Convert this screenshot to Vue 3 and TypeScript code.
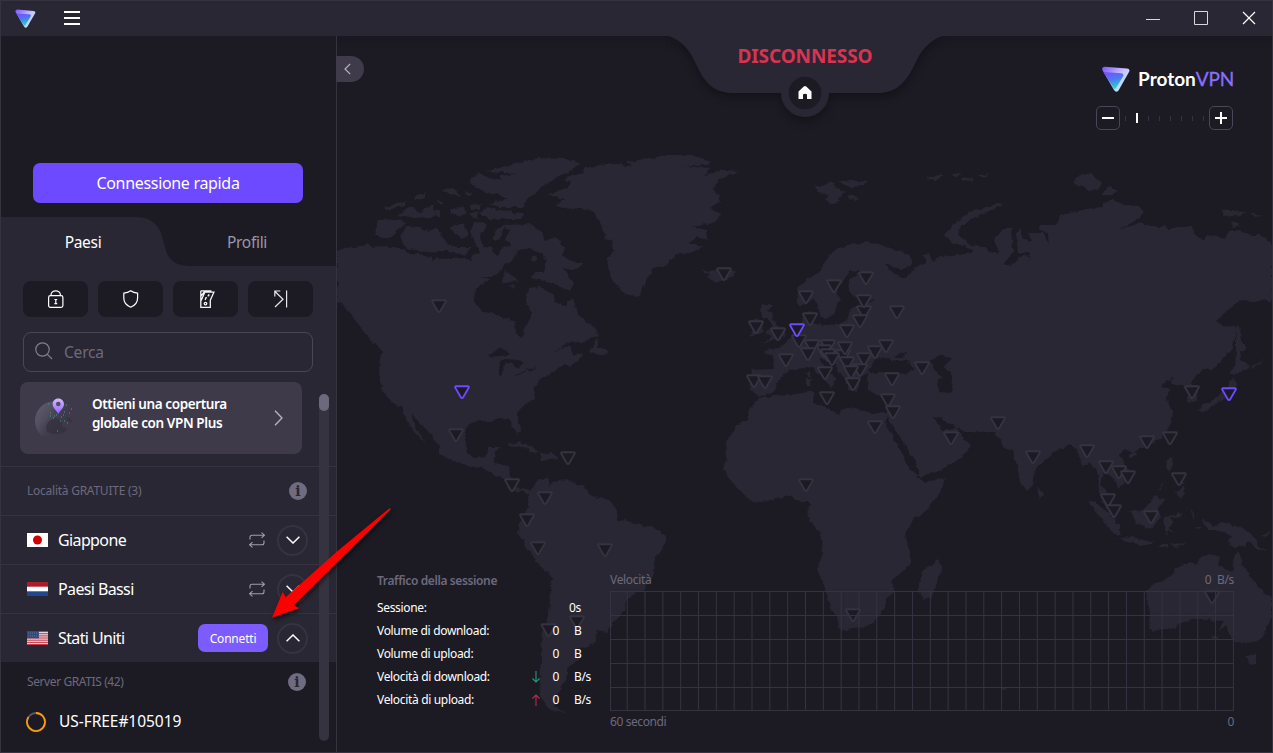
<script setup lang="ts">
interface Marker { x: number; y: number; active?: boolean }

const markers: Marker[] = [
  [439, 299], [456, 428], [568, 451], [512, 478], [545, 491], [527, 513], [538, 541], [605, 543], [577, 615], [548.5, 623],
  [724, 267], [834, 279], [866, 271], [806, 290], [864, 305], [864, 294], [860, 314], [810, 312], [897, 305], [756, 320],
  [778, 327], [847, 324], [799, 334], [812, 339], [828, 339], [824, 344], [828, 348], [843, 349], [845, 341], [808, 347],
  [786, 353], [832, 352], [847, 356], [864, 352], [875, 345], [886, 339], [922, 361], [754, 374], [765, 375], [825, 366],
  [860, 363], [851, 365], [853, 377], [892, 372], [827, 391], [888, 393], [893, 405], [875, 420], [806, 478], [853, 608],
  [951, 431], [1192, 385], [998, 416], [1033, 450], [1087, 444], [1106, 460], [1119, 465], [1128, 470], [1147, 435],
  [1170, 431], [1179, 472], [1108, 493], [1114, 504], [1151, 510], [1212, 590],
].map(([x, y]) => ({ x, y }))
markers.push({ x: 462, y: 385, active: true }, { x: 797, y: 323, active: true }, { x: 1229, y: 387, active: true })

const land: string[] = [
  // North America
  'M337 251L345 248 360 246 368 244 373 248 386 246 400 248 412 254 432 257 433 263 436 258 452 259 465 258 471 262 473 254 479 252 474 240 470 232 474 222 487 223 480 237 483 247 492 248 497 257 503 247 514 246 520 249 514 259 504 266 492 277 480 277 492 279 481 284 475 290 474 301 482 312 494 313 504 318 514 320 517 334 522 337 525 327 531 317 531 311 526 304 528 288 540 287 554 295 555 303 565 306 572 298 575 307 584 320 594 327 599 335 582 342 567 343 554 353 568 345 571 346 572 355 584 354 570 368 566 363 552 373 540 380 534 388 534 399 520 408 517 414 521 430 518 434 513 428 510 420 500 418 490 421 480 421 469 424 465 433 465 445 469 454 475 458 485 457 489 447 499 447 495 458 494 464 509 466 510 478 514 487 522 488 530 490 529 495 522 490 516 493 509 489 504 479 490 473 479 466 472 467 450 460 440 454 440 447 424 428 411 413 415 427 426 443 417 435 407 420 402 408 390 400 383 390 379 378 380 357 383 352 369 338 357 323 344 304 337 302Z',
  // Arctic islands
  'M485 172L510 165 537 158 567 159 581 163 567 172 544 185 538 192 527 197 524 207 500 207 489 204 508 198 500 195 484 193 469 182 479 172 491 178 504 180 499 176 518 174Z',
  'M484 208L522 213 520 219 490 219 479 214Z',
  'M379 220L396 219 407 223 398 229 392 237 385 239 375 235Z',
  'M400 238L405 227 420 228 428 232 437 227 444 240 452 247 472 247 464 255 446 251 424 253 407 248Z',
  'M384 208L407 200 405 205 396 208 391 211Z',
  'M397 215L410 207 420 213 426 208 434 205 432 212 440 210 440 216 414 218Z',
  'M450 210L463 206 467 214 458 216 451 213ZM450 227L465 223 468 234 462 239 455 234 450 229ZM441 190L454 188 461 197 448 194ZM464 191L473 193 471 197 465 196ZM470 205L481 204 479 209 471 208ZM470 213L478 212 477 219 471 217ZM414 195L426 193 424 199 415 199ZM436 199L444 202 440 204ZM495 230L506 224 502 234 500 241 493 238Z',
  'M504 225L530 224 540 230 545 240 556 238 565 248 562 255 570 260 583 264 573 271 562 267 574 283 570 292 557 285 544 281 531 276 534 272 544 272 547 260 540 252 530 248 517 250 511 246 505 239 509 231Z',
  'M504 269L510 274 519 282 508 281 502 284ZM530 258L536 256 537 260 532 262ZM510 286L515 284 514 288ZM599 337L597 347 605 348 609 353 604 356 590 352 595 343Z',
  // Greenland
  'M547 195L567 188 570 182 564 179 582 173 585 168 607 164 632 165 627 162 657 157 664 155 691 155 710 161 708 165 684 166 710 168 705 176 722 170 741 171 720 178 713 187 718 195 720 203 710 207 722 215 713 222 702 225 692 227 707 230 708 241 697 237 688 243 704 247 690 253 677 254 666 265 654 268 650 275 644 284 641 295 636 298 624 293 613 281 607 267 608 257 614 253 613 242 605 238 603 228 594 212 582 208 562 209 556 204 564 199Z',
  // Iceland, Svalbard
  'M702 268L709 273 714 270 729 269 736 273 730 278 718 282 707 279 711 275 703 273Z',
  'M814 185L822 186 833 182 837 188 847 192 840 194 838 201 832 205 825 200 830 194 817 193ZM838 182L850 180 867 182 863 186 850 187ZM847 195L858 198 856 200 849 199Z',
  // British Isles
  'M762 305L769 304 773 306 767 311 774 313 772 320 780 327 786 331 783 338 762 343 772 337 765 332 772 326 767 318 763 318 760 310Z',
  'M748 322L757 318 763 324 763 332 749 336 754 329Z',
  // Europe and Asia
  'M750 391L752 370 773 369 774 358 764 350 779 348 788 340 798 332 804 327 803 317 807 313 813 312 813 321 822 326 847 322 850 309 858 307 875 300 857 298 848 290 849 280 860 272 850 271 842 283 836 291 840 300 833 313 828 319 821 318 818 306 813 299 800 307 797 302 797 287 817 273 828 258 834 250 847 245 870 242 890 249 905 252 912 259 911 267 900 269 884 264 895 275 906 278 912 269 927 263 923 255 929 254 933 261 940 257 960 255 973 252 968 244 980 247 1000 254 994 240 1003 229 1011 229 1013 250 1003 265 1009 267 1018 258 1025 254 1031 260 1028 252 1018 252 1016 237 1020 228 1024 239 1032 241 1028 233 1043 233 1049 243 1048 235 1039 229 1040 225 1056 225 1060 215 1086 209 1103 207 1103 203 1113 199 1123 205 1140 206 1144 213 1137 220 1118 230 1143 222 1146 226 1166 226 1168 230 1190 226 1197 235 1201 240 1208 235 1226 238 1229 231 1236 230 1253 235 1260 235 1272 242 1272 302 1265 299 1255 302 1240 301 1228 310 1216 321 1222 325 1236 327 1235 340 1231 350 1213 370 1203 369 1191 382 1197 390 1197 400 1187 404 1188 393 1182 386 1171 384 1173 378 1160 386 1170 390 1166 398 1173 413 1171 423 1162 438 1143 448 1133 452 1124 449 1119 455 1130 471 1129 479 1118 488 1113 478 1103 472 1100 485 1106 491 1111 505 1113 512 1105 507 1099 492 1098 474 1090 463 1082 466 1078 450 1070 445 1058 450 1036 468 1033 485 1027 491 1021 482 1013 450 1006 448 995 433 965 432 952 425 941 418 934 417 938 424 943 431 957 427 961 435 971 445 965 454 947 467 920 477 916 464 905 444 889 421 887 410 885 395 877 395 868 390 867 378 869 374 860 376 857 392 851 391 842 375 832 361 820 357 823 365 836 379 831 388 824 379 813 367 803 368 790 370 779 380 773 392 760 396Z',
  // Africa
  'M750 408L760 397 790 395 814 391 813 403 823 407 840 414 845 407 873 413 888 413 885 422 900 450 907 465 918 477 923 482 945 478 940 492 927 510 913 520 905 535 910 552 910 565 892 580 894 592 885 600 885 607 873 623 863 628 853 629 840 631 837 617 827 600 825 588 817 570 823 552 820 533 807 517 810 503 797 500 790 496 770 500 753 502 737 488 723 470 727 455 725 445 737 425 747 420Z',
  'M937 557L942 567 932 597 923 600 919 590 923 570 933 565Z',
  // South America
  'M528 494L537 481 549 477 548 487 555 481 570 480 584 487 594 497 610 500 617 510 617 522 625 519 634 523 644 526 653 527 666 535 666 545 654 558 653 576 645 590 636 592 626 600 624 610 607 632 595 630 597 641 589 646 577 648 579 660 567 667 567 677 559 690 554 707 567 713 550 711 540 697 541 653 542 633 549 613 552 577 537 563 527 547 518 533 519 523 529 507Z',
  'M507 445L519 442 530 446 540 453 530 452 523 446 512 447ZM540 454L552 453 559 458 542 460ZM562 457h8v2h-8Z',
  // Oceania
  'M1145 592L1153 585 1171 577 1176 568 1190 562 1196 565 1200 557 1212 554 1220 557 1218 565 1232 573 1235 557 1238 551 1242 563 1248 573 1260 587 1272 600 1272 617 1261 639 1250 643 1235 642 1228 633 1226 625 1218 630 1224 621 1210 620 1196 619 1180 623 1176 628 1153 631 1149 627 1150 613Z',
  'M1245 655L1256 655 1256 664 1250 665Z',
  'M1087 500L1095 502 1106 511 1120 525 1120 535 1112 533 1099 515ZM1118 538L1133 537 1147 541 1155 544 1137 544ZM1160 544h8v2h-8ZM1172 544l14 -1 -10 5ZM1130 511L1143 510 1155 496 1165 500 1158 509 1160 518 1152 528 1136 524ZM1165 516L1175 515 1183 513 1180 517 1169 518 1175 523 1169 526 1175 534 1168 530 1166 536 1164 525Z',
  'M1201 520L1210 521 1213 527 1223 522 1243 528 1255 538 1259 546 1266 551 1257 549 1249 541 1244 547 1235 547 1228 542 1232 537 1224 532 1212 530 1204 526Z',
  'M1166 460L1173 457 1174 465 1170 472 1165 467ZM1172 492L1179 491 1183 486 1185 495 1181 498 1178 493ZM1158 489l10 -11 -8 11ZM1181 480l4 4 -4 1ZM1192 510l3 5 -2 5ZM1194 527l8 0 -3 2ZM1261 535l10 -5 -4 6Z',
  'M1037 486L1044 494 1039 498ZM1129 454l6 -2 2 3 -5 3 -3 -1Z',
  // Japan and Sakhalin
  'M1236 325L1239 326 1243 344 1247 350 1240 352 1241 360 1251 367 1240 373 1230 374 1235 367 1236 350ZM1234 377L1237 385 1230 396 1222 400 1210 405 1216 403 1202 413 1198 409 1205 404 1215 399 1227 389 1230 381ZM1251 368l15 -10 -13 11Z',
  // Arctic Russia
  'M953 243L944 235 957 221 970 212 1000 203 1001 206 975 217 961 226 958 234 967 243 974 250 965 246Z',
  'M1073 182L1083 173 1093 175 1101 182 1099 190 1088 189ZM1101 195L1110 186 1118 191 1113 195ZM1221 210L1246 212 1242 215 1223 217ZM1250 213L1265 216 1255 217ZM1231 222l10 3 -8 2ZM926 178l12 -3 6 1 -9 4ZM950 174l12 -1 -4 4ZM961 179l10 -2 4 3 -12 1ZM978 175l12 -1 -7 4ZM1210 636l9 0 0 1 -6 1Z',
  'M806 373l4 -2 0 6 -3 1ZM806 379l5 0 0 7 -5 0ZM1000 688l6 -1 1 3 -5 0Z',
]

const water: string[] = [
  'M868 370L875 359 887 357 893 362 907 360 914 370 905 375 888 371 875 374Z',
  'M893 358L900 353 907 352 903 358Z',
  'M930 362L940 355 951 357 945 367 953 376 952 393 940 392 937 382 941 377Z',
  'M487 357L500 348 505 350 510 356 498 356Z',
  'M498 376L500 361 507 359 518 360 523 363 517 369 512 363 505 362 503 375Z',
  'M513 376L528 369 523 374ZM526 370l10 -3 -5 4Z',
]

const cols = Array.from({ length: 35 }, (_, i) => 17.2 + i * 17.83)
const rows = [0.5, 24.5, 48.5, 72.5, 96.5, 119.5]
const ticks = [0, 1, 2, 3, 4, 5, 6, 7]

interface Country { name: string; flag: 'jp' | 'nl' | 'us'; open: boolean }
const countries: Country[] = [
  { name: 'Giappone', flag: 'jp', open: false },
  { name: 'Paesi Bassi', flag: 'nl', open: false },
  { name: 'Stati Uniti', flag: 'us', open: true },
]

interface Stat { label: string; value: string; unit: string; dir?: 'down' | 'up' }
const stats: Stat[] = [
  { label: 'Volume di download:', value: '0', unit: 'B' },
  { label: 'Volume di upload:', value: '0', unit: 'B' },
  { label: 'Velocità di download:', value: '0', unit: 'B/s', dir: 'down' },
  { label: 'Velocità di upload:', value: '0', unit: 'B/s', dir: 'up' },
]
</script>

<template>
  <div class="window">
    <svg class="defs" width="0" height="0">
      <defs>
        <linearGradient id="pv-face" x1="0.2" y1="0" x2="0.5" y2="1">
          <stop offset="0" stop-color="#7350ff" /><stop offset="0.5" stop-color="#4a7df0" /><stop offset="1" stop-color="#23dcc3" />
        </linearGradient>
        <linearGradient id="pv-edge" x1="0" y1="0" x2="1" y2="0.7">
          <stop offset="0" stop-color="#7a57ff" /><stop offset="0.6" stop-color="#c9c0ff" /><stop offset="1" stop-color="#b6f5ee" />
        </linearGradient>
      </defs>
    </svg>

    <header class="titlebar">
      <svg class="tb-logo" width="21" height="19" viewBox="0 0 28 26">
        <path d="M3 .8 25 2.6Q28.6 3 27 6L16.5 24.4Q14 27.200 12 24L.6 4.500Q-.9 1 3 .8Z" fill="url(#pv-edge)" />
        <path d="M1.500 6 19 7.200Q22.500 7.600 21 10.400L14 22Q12.700 24 11.500 22Z" fill="url(#pv-face)" />
      </svg>
      <svg class="burger" width="16" height="14" viewBox="0 0 16 14"><path d="M0 1h16M0 7h16M0 13h16" stroke="#fff" stroke-width="2" /></svg>
      <div class="controls">
        <svg width="14" height="14" viewBox="0 0 14 14"><path d="M0 8.500h14" stroke="#d8d8dc" /></svg>
        <svg width="14" height="14" viewBox="0 0 14 14"><path d="M.5.5h13v13H.5z" fill="none" stroke="#d8d8dc" /></svg>
        <svg width="14" height="14" viewBox="0 0 14 14"><path d="M1 1l12 12M13 1L1 13" stroke="#fff" stroke-width="1.200" /></svg>
      </div>
    </header>

    <div class="body">
      <aside class="sidebar">
        <div class="profile"><button class="quick">Connessione rapida</button></div>
        <nav class="tabs">
          <svg class="tab-shape" width="336" height="49" viewBox="0 0 336 49">
            <path d="M0 0H136C150 0 159 9 161.500 21L165 34C168 44 176 49 190 49H0Z" fill="#292733" />
          </svg>
          <span class="tab on">Paesi</span><span class="tab">Profili</span>
        </nav>
        <div class="list-panel">
          <div class="filters">
            <button>
              <svg width="16" height="18" viewBox="0 0 16 18" fill="none" stroke="#fff" stroke-width="1.200">
                <rect x=".6" y="5.600" width="14.300" height="11.800" rx="1.800" /><path d="M3 5.500V5a4.700 4.200 0 0 1 9.400 0v.5" />
                <path d="M7.800 9v5.200M6.400 9.500h2.800M6.400 13.700h2.800" stroke-width="1.200" />
              </svg>
            </button>
            <button>
              <svg width="16" height="18" viewBox="0 0 16 18" fill="none" stroke="#fff" stroke-width="1.200">
                <path d="M7.700 .8C5.500 2.400 3.100 3 .8 3.200V8C.8 12.300 3.500 15.500 7.700 17.200c4.200-1.700 6.900-4.900 6.900-9.200V3.200C12.300 3 9.900 2.400 7.700 .8Z" />
              </svg>
            </button>
            <button>
              <svg class="ticket" width="15" height="18" viewBox="0 0 15 18" fill="none" stroke="#f4f4f6" stroke-width="1.300">
                <path d="M.8 .8V17.300H10.300V10.200L13.900 2.200H4.800L1.200 10.600M.8 .9H10.800V2.200M4.600 1.400 1 6.200" />
                <path d="M5.200 10 5.800 7.800M8 6.200 9 4.200M5.200 8.200 7 7.600M7.600 5.800 9.400 5.600" /><circle cx="5.500" cy="13.600" r="1.300" />
              </svg>
            </button>
            <button>
              <svg width="14" height="18" viewBox="0 0 14 18" fill="none" stroke="#e8e8ec" stroke-width="1.200">
                <path d="M1 17 9 9.200 1 1.500M.8 6.500V1h5.500M12.600.5v17" />
              </svg>
            </button>
          </div>
          <div class="search">
            <svg width="18" height="18" viewBox="0 0 18 18" fill="none" stroke="#817d91" stroke-width="1.200"><circle cx="7.500" cy="7.500" r="6.700" /><path d="M12.400 12.400 17 17" /></svg>
            <span>Cerca</span>
          </div>
          <div class="promo">
            <svg class="globe" width="46" height="40" viewBox="0 0 46 40">
              <defs>
                <linearGradient id="gl" x1="0" y1=".1" x2=".9" y2=".75"><stop offset="0" stop-color="#625c70" /><stop offset=".35" stop-color="#514c5e" /><stop offset=".75" stop-color="#403b4c" stop-opacity="0" /></linearGradient>
                <linearGradient id="pin" x1="0" y1="0" x2="0" y2="1"><stop offset="0" stop-color="#d7b8ff" /><stop offset="1" stop-color="#8c66ff" /></linearGradient>
              </defs>
              <circle cx="22" cy="25" r="20" fill="url(#gl)" />
              <path d="M13 31Q14 26 18 24L23 22 28 25 29 30 34 33 32 36 26 38 20 38 14 36ZM33 21l5 2 2 4-5-2Z" fill="#35313f" opacity=".8" />
              <path d="M15 8h1M17 20h1M20 22h1M28 21h1M31 16h1M33 9h1M31 25h1M36 17h1M38 13h1M23 19h1M29 11h1M34 27h1M17 17h1M27 25h1M24 35h1M21 20h1M30 19h1" stroke="#28a79c" stroke-width="1" />
              <path d="M25.300 2.500c3.400 0 5.700 2.500 5.700 5.500 0 4-4 6.500-5.700 10-1.700-3.500-5.700-6-5.700-10 0-3 2.300-5.500 5.700-5.500Z" fill="url(#pin)" />
              <circle cx="25.300" cy="8" r="2.300" fill="#514b65" />
            </svg>
            <p>Ottieni una copertura<br>globale con VPN Plus</p>
            <svg class="chev" width="9" height="16" viewBox="0 0 9 16"><path d="M1 .8 8 8 1 15.200" fill="none" stroke="#b9b6c2" stroke-width="1.300" /></svg>
          </div>
          <div class="section free">
            <span>Località GRATUITE (3)</span><i class="info">i</i>
          </div>
          <div v-for="c in countries" :key="c.name" class="country">
            <svg v-if="c.flag === 'jp'" width="21" height="14" viewBox="0 0 21 14"><path d="M0 0h21v14H0z" fill="#fff" /><circle cx="10.500" cy="7" r="4.500" fill="#d30000" /></svg>
            <svg v-else-if="c.flag === 'nl'" width="21" height="14" viewBox="0 0 21 14"><path d="M0 0h21v14H0z" fill="#fff" /><path d="M0 0h21v4.700H0z" fill="#ae1c28" /><path d="M0 9.300h21V14H0z" fill="#21468b" /></svg>
            <svg v-else width="21" height="14" viewBox="0 0 21 14">
              <path d="M0 0h21v14H0z" fill="#e6d5da" /><path d="M0 .5h21M0 2.700h21M0 4.900h21M0 7h21M0 9.200h21M0 11.400h21M0 13.500h21" stroke="#c93a4b" /><path d="M0 0h12v7.300H0z" fill="#33497c" />
              <path d="M1 2h11M1 5h11" stroke="#6d7fa8" stroke-dasharray="1 1" stroke-width=".8" />
            </svg>
            <span class="cname">{{ c.name }}</span>
            <button v-if="c.open" class="connect">Connetti</button>
            <svg v-else class="swap" width="16" height="16" viewBox="0 0 16 16" fill="none" stroke="#a19daf" stroke-width="1.100">
              <path d="M12.500.6 15.500 3.200 12.500 5.800M15 3.200H3Q1 3.200 1 5.200V7.500M3.500 10.200.5 12.800l3 2.600M1 12.800h12q2 0 2-2V8.500" />
            </svg>
            <span class="round">
              <svg width="14" height="8" viewBox="0 0 14 8"><path :d="c.open ? 'M.6 7.200 7 1 13.400 7.200' : 'M.6 .8 7 7 13.400 .8'" fill="none" stroke="#fff" stroke-width="1.500" /></svg>
            </span>
          </div>
        </div>
        <div class="servers">
          <div class="section"><span>Server GRATIS (42)</span><i class="info">i</i></div>
          <div class="server">
            <svg width="20" height="20" viewBox="0 0 20 20" fill="none" stroke-width="1.800"><circle cx="10" cy="10" r="9" stroke="#5b5768" /><path d="M10 1A9 9 0 1 1 2.500 5" stroke="#ff9a00" /></svg>
            <span>US-FREE#105019</span>
          </div>
        </div>
        <div class="scroll"><div class="thumb"></div></div>
      </aside>

      <main class="map">
        <svg class="world" width="936" height="717" viewBox="337 36 936 717">
          <defs>
            <filter id="coast" x="0" y="0" width="100%" height="100%" color-interpolation-filters="sRGB">
              <feTurbulence type="fractalNoise" baseFrequency="0.16" numOctaves="3" seed="4" />
              <feDisplacementMap in="SourceGraphic" scale="5" xChannelSelector="R" yChannelSelector="G" />
            </filter>
          </defs>
          <g filter="url(#coast)">
            <path v-for="(d, i) in land" :key="i" :d="d" fill="#292733" />
            <path v-for="(d, i) in water" :key="'w' + i" :d="d" fill="#1c1b24" />
          </g>
          <g v-for="(m, i) in markers" :key="'m' + i" :transform="`translate(${m.x} ${m.y + 0.5})`">
            <path d="M-5.800 .8H5.800Q7.400 .8 6.600 2.400L1.200 11.700Q0 13.400-1.200 11.700L-6.600 2.400Q-7.400 .8-5.800 .8Z" fill="#1c1b24" :stroke="m.active ? '#6d4aff' : '#363341'" stroke-width="1.900" />
          </g>
        </svg>

        <svg class="status-shape" width="280" height="96" viewBox="665 36 280 96">
          <path d="M669 36H942C929 41 921 50 914.500 65C904 86 894 93 877 93H829A24 24 0 0 1 781 93H735C716 93 706 86 696.500 65C690 50 682 41 669 36Z" fill="#292733" />
          <circle cx="805" cy="93" r="16.300" fill="#1c1b24" />
          <path d="M798.500 91.500 803.800 86.500Q805 85.500 806.200 86.500L811.500 91.500V99H807V94.500Q805 93 803 94.500V99H798.500Z" fill="#fff" />
        </svg>
        <div class="status">DISCONNESSO</div>

        <button class="collapse"><svg width="7" height="12" viewBox="0 0 7 12"><path d="M6.200.8 1 6l5.200 5.200" fill="none" stroke="#b9b6c2" stroke-width="1.200" /></svg></button>

        <div class="brand">
          <div class="brand-line">
            <svg width="28" height="26" viewBox="0 0 28 26">
              <path d="M3 .8 25 2.600Q28.600 3 27 6L16.500 24.400Q14 27.200 12 24L.6 4.500Q-.9 1 3 .8Z" fill="url(#pv-edge)" />
              <path d="M1.500 6 19 7.200Q22.500 7.600 21 10.400L14 22Q12.700 24 11.500 22Z" fill="url(#pv-face)" />
            </svg>
            <span class="bp">Proton</span><span class="bv">VPN</span>
          </div>
          <div class="zoom">
            <button><svg width="14" height="14" viewBox="0 0 14 14"><path d="M1 7h12" stroke="#fff" stroke-width="2" /></svg></button>
            <div class="ticks"><i v-for="t in ticks" :key="t" :class="{ cur: t === 1 }"></i></div>
            <button><svg width="14" height="14" viewBox="0 0 14 14"><path d="M1 7h12M7 1v12" stroke="#fff" stroke-width="2" /></svg></button>
          </div>
        </div>

        <div class="bottom">
          <section class="traffic">
            <h3>Traffico della sessione</h3>
            <div class="stat"><span class="lab">Sessione:</span><span class="secs">0s</span></div>
            <div v-for="s in stats" :key="s.label" class="stat">
              <span class="lab">{{ s.label }}</span>
              <span class="dir">
                <svg v-if="s.dir" width="8" height="12" viewBox="0 0 8 12" fill="none" :stroke="s.dir === 'down' ? '#1f9a78' : '#b82c4c'" stroke-width="1.100">
                  <path :d="s.dir === 'down' ? 'M4 0v11M.5 7.500 4 11l3.500-3.500' : 'M4 12V1M.5 4.500 4 1l3.500 3.500'" />
                </svg>
              </span>
              <span class="val">{{ s.value }}</span><span class="unit">{{ s.unit }}</span>
            </div>
          </section>
          <section class="speed">
            <div class="cap"><span>Velocità</span><span class="rate">0&nbsp; B/s</span></div>
            <svg width="624" height="120" viewBox="0 0 624 120" stroke="#363341" fill="none">
              <path d="M.5 0V120" /><path v-for="x in cols" :key="x" :d="`M${x} 0V120`" />
              <path v-for="y in rows" :key="y" :d="`M0 ${y}H624`" />
            </svg>
            <div class="cap low"><span class="sixty">60 secondi</span><span>0</span></div>
          </section>
        </div>
      </main>
    </div>

    <svg class="arrow" width="140" height="130" viewBox="260 500 140 130">
      <path d="M272 617.700 282.700 592 285.700 597.300 337 551.500 389.500 508.300Q391.500 508.500 390 510.300L337 562.500 294 605.300 299 608.300Z" fill="#f00" />
    </svg>
  </div>
</template>

<style>
html, body { margin: 0; background: #1c1b24; overflow: hidden; }
</style>

<style scoped>
* { box-sizing: border-box; }
button { border: 0; padding: 0; font: inherit; color: inherit; display: flex; align-items: center; justify-content: center; }
.window { position: relative; width: 1273px; height: 753px; border: 1px solid #363340; background: #1c1b24; color: #fff; font-family: "Noto Sans", "Open Sans", sans-serif; display: flex; flex-direction: column; overflow: hidden; }
.defs { position: absolute; }
.titlebar { height: 35px; flex: none; background: #292733; display: flex; align-items: center; padding-left: 14px; }
.tb-logo { margin-top: -1px; }
.burger { margin-left: 28px; margin-top: -1px; }
.controls { margin-left: auto; display: flex; gap: 34px; padding-right: 16px; margin-top: -1px; }
.body { flex: 1; display: flex; min-height: 0; }
.sidebar { position: relative; width: 336px; flex: none; border-right: 1px solid #363340; display: flex; flex-direction: column; background: #1c1b24; }
.profile { height: 181px; padding: 127px 32px 0; }
.quick { width: 270px; height: 40px; border-radius: 7px; background: #6d4aff; font-size: 16px; letter-spacing: -0.32px; }
.tabs { position: relative; height: 49px; display: flex; }
.tab-shape { position: absolute; left: 0; top: 0; }
.tab { position: relative; width: 164px; text-align: center; line-height: 50px; font-size: 15.500px; letter-spacing: -0.3px; color: #9a97a8; }
.tab.on { color: #fff; }
.list-panel { background: #292733; padding-top: 15px; }
.filters { display: flex; gap: 10px; padding-left: 22px; }
.filters button { width: 65px; height: 36px; border-radius: 8px; background: #1c1b24; }
.ticket { margin-left: 3px; }
.search { margin: 15px 0 0 22px; width: 290px; height: 40px; border: 1px solid #4a4658; border-radius: 8px; display: flex; align-items: center; gap: 11px; padding-left: 11px; color: #6d697d; font-size: 15.500px; letter-spacing: -0.2px; }
.search svg { margin-top: -2px; }
.promo { margin: 10px 0 0 19px; width: 282px; height: 72px; background: #3f3a4a; border-radius: 8px; display: flex; align-items: center; padding-left: 13px; }
.globe { margin-top: -5px; }
.promo p { margin: -8px 0 0 13px; font-size: 13.500px; line-height: 19px; font-weight: 600; letter-spacing: -0.38px; white-space: nowrap; }
.chev { margin-left: auto; margin-right: 19px; }
.section { display: flex; align-items: center; justify-content: space-between; padding: 0 29px 0 26px; font-size: 12px; letter-spacing: -0.3px; color: #6d697d; }
.section > span { margin-top: -2px; }
.free { margin-top: 12px; height: 49px; border-top: 1px solid #363340; letter-spacing: -0.25px; }
.info { width: 18px; height: 18px; border-radius: 50%; background: #6f6b80; color: #292733; font: 700 14px/18px "DejaVu Serif", serif; text-align: center; letter-spacing: 0; }
.country { height: 49px; border-top: 1px solid #363340; display: flex; align-items: center; padding: 0 28px 0 26px; }
.cname { margin-left: 10px; font-size: 16px; letter-spacing: -0.62px; flex: 1; }
.swap { margin-right: 12px; }
.round { width: 31px; height: 31px; border: 2px solid #363340; border-radius: 50%; display: flex; align-items: center; justify-content: center; }
.connect { width: 70px; height: 28px; border-radius: 7px; background: #7c5cff; font-size: 12px; letter-spacing: -0.2px; margin-right: 9px; }
.servers { flex: 1; }
.servers .section { height: 41px; padding-right: 30px; letter-spacing: -0.4px; }
.servers .info { margin-top: -1px; background: #6f6b80; }
.server { display: flex; align-items: center; gap: 13px; padding-left: 25px; height: 38px; font-size: 15.500px; letter-spacing: -0.05px; }
.server span { margin-top: -2px; }
.scroll { position: absolute; left: 318px; top: 358px; width: 10px; height: 347px; border-radius: 5px; background: #363340; }
.thumb { height: 17px; border-radius: 5px; background: #6d697d; }
.map { position: relative; flex: 1; min-width: 0; display: flex; justify-content: space-between; align-items: flex-end; }
.map::before { content: ""; position: absolute; z-index: 1; inset: 0 0 auto; height: 14px; background: linear-gradient(#15141b80, #15141b00); }
.world { position: absolute; left: 0; top: 0; }
.status-shape { position: absolute; z-index: 2; left: 328px; top: 0; filter: drop-shadow(0 4px 5px #0005); clip-path: inset(0 0 0 0); }
.status { position: absolute; z-index: 3; left: 368px; top: 6px; width: 200px; text-align: center; font-weight: 700; font-size: 19px; letter-spacing: -0.1px; line-height: 28px; color: #dc3251; }
.collapse { position: absolute; left: -1px; top: 20px; width: 28px; height: 26px; border-radius: 0 13px 13px 0; background: #3f3b4b; padding-right: 5px; }
.brand { position: absolute; z-index: 2; right: 39px; top: 30px; width: 137px; }
.brand-line { display: flex; align-items: center; justify-content: flex-end; height: 26px; margin-right: -1px; font: 700 19px/26px Lato, sans-serif; }
.bp { margin-left: 8px; }
.bv { color: #8a6eff; font-weight: 400; letter-spacing: -0.2px; -webkit-text-stroke: 0.3px #8a6eff; }
.zoom { display: flex; align-items: center; margin-top: 14px; }
.zoom button { width: 24px; height: 24px; border: 1px solid #4a4658; border-radius: 5px; background: #1c1b24; }
.ticks { flex: 1; display: flex; align-items: center; justify-content: space-between; padding: 0 5px; }
.ticks i { width: 1px; height: 5px; background: #363340; }
.ticks i.cur { width: 2px; height: 10px; background: #fff; }
.bottom { position: relative; z-index: 2; width: 100%; height: 184px; display: flex; padding-left: 40px; font-size: 12px; letter-spacing: -0.33px; }
.traffic { width: 233px; }
.traffic h3 { margin: 4px 0 6px; font-size: 12px; line-height: 18px; font-weight: 600; color: #6d697d; letter-spacing: -0.38px; }
.stat { display: flex; align-items: center; height: 23px; }
.lab { width: 155px; }
.secs { margin-left: 37px; }
.dir { width: 8px; display: flex; }
.val { width: 19px; text-align: right; }
.unit { margin-left: 15px; }
.speed { width: 624px; color: #6d697d; }
.speed svg { display: block; }
.cap { display: flex; justify-content: space-between; line-height: 18px; padding: 3px 0 2px; }
.cap.low { padding: 2px 0 0; }
.sixty { letter-spacing: -0.4px; }
.arrow { position: absolute; z-index: 5; left: 259px; top: 499px; filter: drop-shadow(1px 3px 2px #0008); }
</style>
